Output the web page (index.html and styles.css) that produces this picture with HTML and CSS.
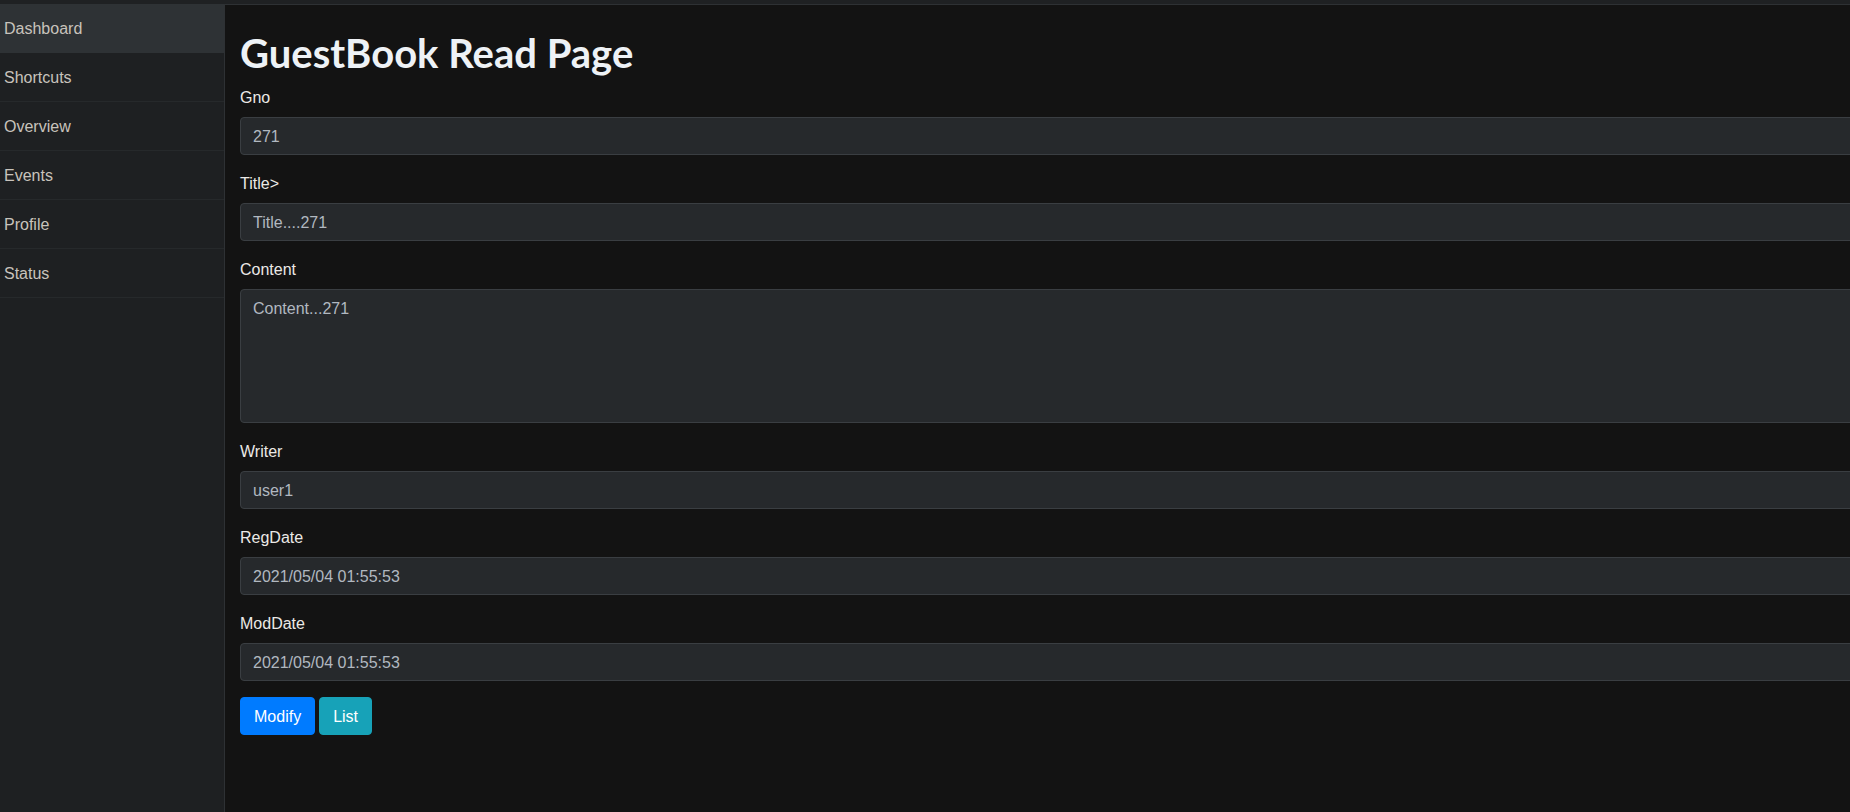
FILE: index.html
```html
<!DOCTYPE html>
<html lang="en">
<head>
<meta charset="utf-8">
<title>GuestBook Read Page</title>
<link rel="stylesheet" href="styles.css">
</head>
<body>
<div class="topstrip"></div>
<div class="wrapper">
  <nav class="sidebar">
    <a class="item active">Dashboard</a>
    <a class="item">Shortcuts</a>
    <a class="item">Overview</a>
    <a class="item">Events</a>
    <a class="item">Profile</a>
    <a class="item">Status</a>
  </nav>
  <main class="content">
    <h1 class="title">GuestBook Read Page</h1>
    <div class="group">
      <label class="label">Gno</label>
      <input class="control" type="text" value="271" readonly>
    </div>
    <div class="group">
      <label class="label">Title&gt;</label>
      <input class="control" type="text" value="Title....271" readonly>
    </div>
    <div class="group">
      <label class="label">Content</label>
      <textarea class="control area" rows="5" readonly>Content...271</textarea>
    </div>
    <div class="group">
      <label class="label">Writer</label>
      <input class="control" type="text" value="user1" readonly>
    </div>
    <div class="group">
      <label class="label">RegDate</label>
      <input class="control" type="text" value="2021/05/04 01:55:53" readonly>
    </div>
    <div class="group">
      <label class="label">ModDate</label>
      <input class="control" type="text" value="2021/05/04 01:55:53" readonly>
    </div>
    <div class="actions">
      <button class="btn btn-primary" type="button">Modify</button>
      <button class="btn btn-info" type="button">List</button>
    </div>
  </main>
</div>
</body>
</html>
```

FILE: styles.css
```css
html, body {
  margin: 0;
  padding: 0;
  height: 100%;
  overflow: hidden;
  background: #131313;
  font-family: "Liberation Sans", Arial, sans-serif;
  font-size: 16px;
  line-height: 24px;
  color: #e8e6e3;
}

.topstrip {
  height: 4px;
  background: #1f2123;
}

.wrapper {
  display: flex;
  height: calc(100% - 4px);
}

.sidebar {
  flex: 0 0 224px;
  width: 224px;
  background: #1e2022;
  border-right: 1px solid #2e3134;
  display: flex;
  flex-direction: column;
}

.item {
  display: block;
  padding: 13px 4px 11px;
  border-bottom: 1px solid #26292b;
  color: #c8c3bc;
  text-decoration: none;
  white-space: nowrap;
}

.item.active {
  background: #2e3235;
  border-bottom-color: #2e3235;
}

.content {
  flex: 0 0 auto;
  width: 1800px;
  border-top: 1px solid #2e3134;
  padding: 0 15px;
  box-sizing: border-box;
  background: #131313;
}

.title {
  margin: 24px 0 8px;
  font-family: Lato, "Liberation Sans", sans-serif;
  font-size: 40px;
  line-height: 48px;
  font-weight: 700;
  color: #eef2f6;
}

.group {
  margin-bottom: 16px;
}

.label {
  display: block;
  margin-bottom: 8px;
  padding-top: 1px;
  height: 23px;
  color: #ebe9e6;
}

.control {
  display: block;
  width: 100%;
  box-sizing: border-box;
  height: 38px;
  padding: 7px 12px 5px;
  font-family: inherit;
  font-size: 16px;
  line-height: 24px;
  color: #b1b8c0;
  background: #26292c;
  border: 1px solid #3a3e42;
  border-radius: 4px;
  outline: none;
  margin: 0;
}

.area {
  height: 134px;
  resize: none;
  overflow: hidden;
}

.actions {
  display: flex;
  gap: 4px;
}

.btn {
  height: 38px;
  padding: 7px 13px 5px;
  font-family: inherit;
  font-size: 16px;
  line-height: 24px;
  color: #ffffff;
  border: 1px solid transparent;
  border-radius: 4px;
  cursor: pointer;
}

.btn-primary {
  background: #007bff;
  border-color: #007bff;
}

.btn-info {
  background: #17a2b8;
  border-color: #17a2b8;
}
```
